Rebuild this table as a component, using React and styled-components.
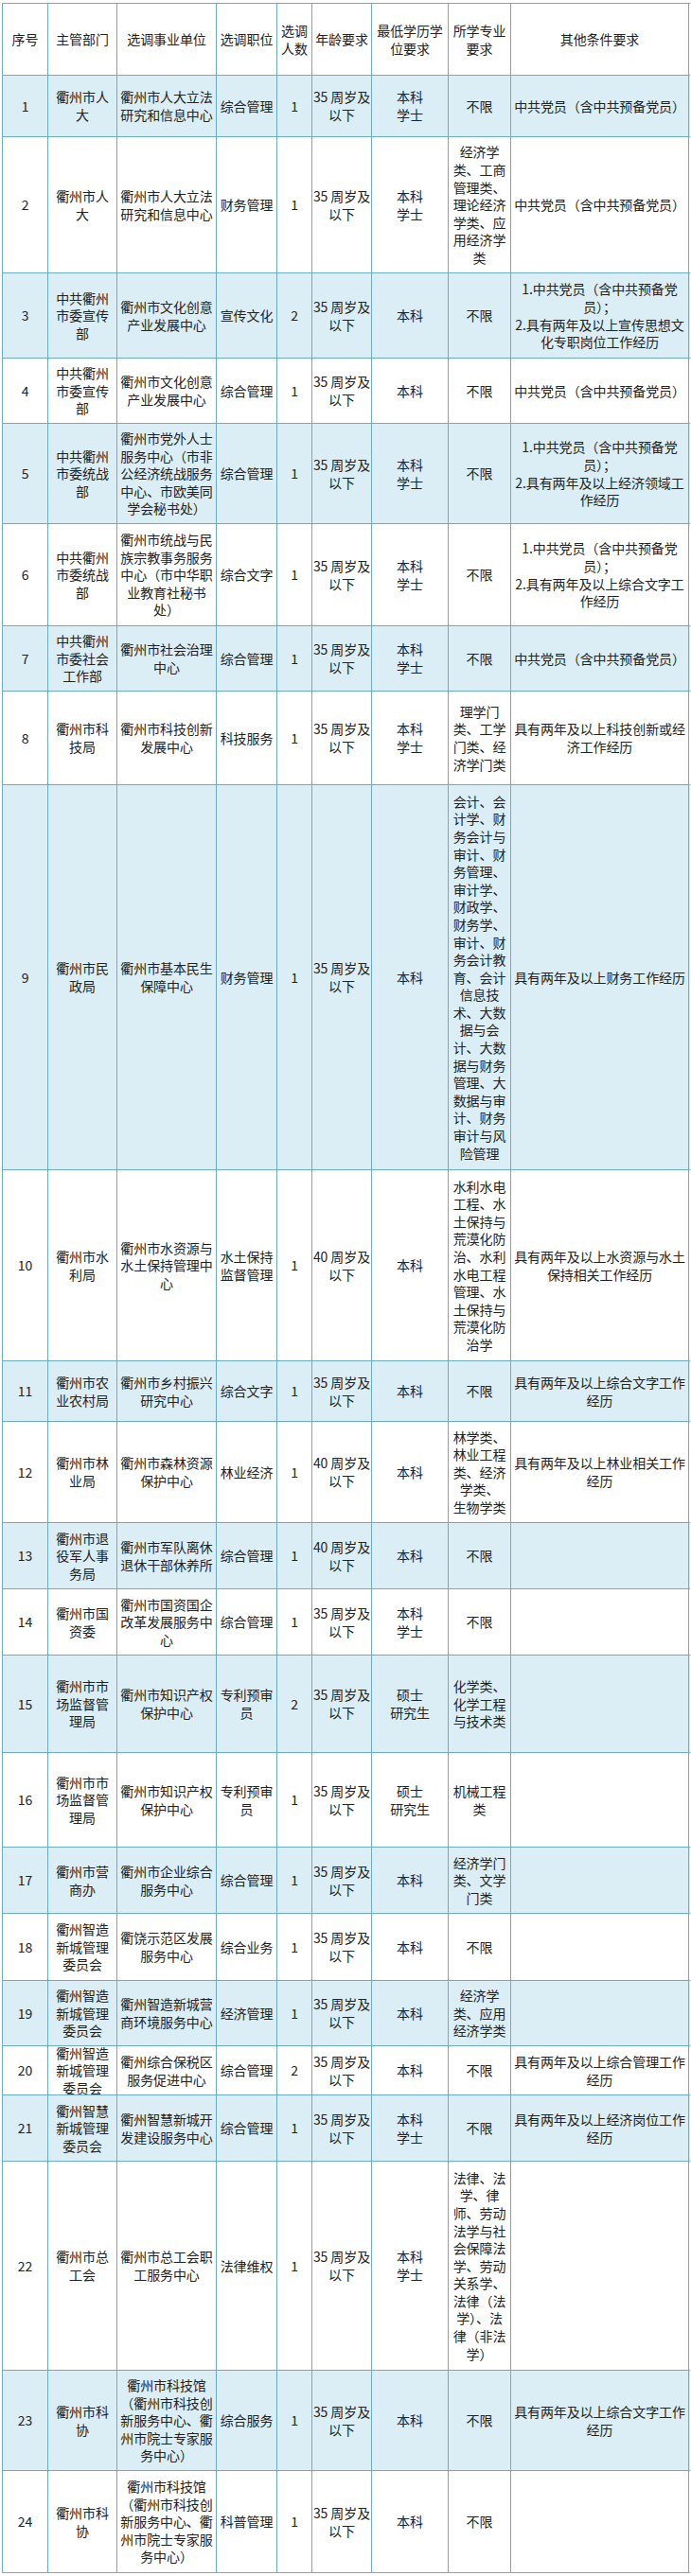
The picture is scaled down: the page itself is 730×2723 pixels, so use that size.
import React from "react";
import styled, { createGlobalStyle } from "styled-components";

const LINE = "#6badc9";
const STRIPE = "#dbeef5";

const GlobalStyle = createGlobalStyle`
  html, body {
    margin: 0;
    padding: 0;
    background: #fff;
  }
  body {
    font-family: "Noto Sans CJK SC", "Noto Sans", sans-serif;
    color: #222;
  }
`;

const COLS = "48px 73px 105px 64px 37px 63px 81px 66px 188px";

const head = [
  "序号",
  "主管部门",
  "选调事业单位",
  "选调职位",
  "选调\n人数",
  "年龄要求",
  "最低学历学\n位要求",
  "所学专业\n要求",
  "其他条件要求",
];

const PARTY = "中共党员（含中共预备党员）";
const AGE35 = "35 周岁及\n以下";
const AGE40 = "40 周岁及\n以下";
const KJG = "衢州市科技馆\n（衢州市科技创\n新服务中心、衢\n州市院士专家服\n务中心）";

// [height, ...cells]
const rows = [
  [65, "1", "衢州市人\n大", "衢州市人大立法\n研究和信息中心", "综合管理", "1", AGE35, "本科\n学士", "不限", PARTY],
  [144, "2", "衢州市人\n大", "衢州市人大立法\n研究和信息中心", "财务管理", "1", AGE35, "本科\n学士",
    "经济学\n类、工商\n管理类、\n理论经济\n学类、应\n用经济学\n类", PARTY],
  [90, "3", "中共衢州\n市委宣传\n部", "衢州市文化创意\n产业发展中心", "宣传文化", "2", AGE35, "本科", "不限",
    "1.中共党员（含中共预备党\n员）；\n2.具有两年及以上宣传思想文\n化专职岗位工作经历"],
  [69, "4", "中共衢州\n市委宣传\n部", "衢州市文化创意\n产业发展中心", "综合管理", "1", AGE35, "本科", "不限", PARTY],
  [106, "5", "中共衢州\n市委统战\n部", "衢州市党外人士\n服务中心（市非\n公经济统战服务\n中心、市欧美同\n学会秘书处）",
    "综合管理", "1", AGE35, "本科\n学士", "不限",
    "1.中共党员（含中共预备党\n员）；\n2.具有两年及以上经济领域工\n作经历"],
  [108, "6", "中共衢州\n市委统战\n部", "衢州市统战与民\n族宗教事务服务\n中心（市中华职\n业教育社秘书\n处）",
    "综合文字", "1", AGE35, "本科\n学士", "不限",
    "1.中共党员（含中共预备党\n员）；\n2.具有两年及以上综合文字工\n作经历"],
  [69, "7", "中共衢州\n市委社会\n工作部", "衢州市社会治理\n中心", "综合管理", "1", AGE35, "本科\n学士", "不限", PARTY],
  [99, "8", "衢州市科\n技局", "衢州市科技创新\n发展中心", "科技服务", "1", AGE35, "本科\n学士",
    "理学门\n类、工学\n门类、经\n济学门类", "具有两年及以上科技创新或经\n济工作经历"],
  [407, "9", "衢州市民\n政局", "衢州市基本民生\n保障中心", "财务管理", "1", AGE35, "本科",
    "会计、会\n计学、财\n务会计与\n审计、财\n务管理、\n审计学、\n财政学、\n财务学、\n审计、财\n务会计教\n育、会计\n信息技\n术、大数\n据与会\n计、大数\n据与财务\n管理、大\n数据与审\n计、财务\n审计与风\n险管理",
    "具有两年及以上财务工作经历"],
  [202, "10", "衢州市水\n利局", "衢州市水资源与\n水土保持管理中\n心", "水土保持\n监督管理", "1", AGE40, "本科",
    "水利水电\n工程、水\n土保持与\n荒漠化防\n治、水利\n水电工程\n管理、水\n土保持与\n荒漠化防\n治学",
    "具有两年及以上水资源与水土\n保持相关工作经历"],
  [64, "11", "衢州市农\n业农村局", "衢州市乡村振兴\n研究中心", "综合文字", "1", AGE35, "本科", "不限",
    "具有两年及以上综合文字工作\n经历"],
  [107, "12", "衢州市林\n业局", "衢州市森林资源\n保护中心", "林业经济", "1", AGE40, "本科",
    "林学类、\n林业工程\n类、经济\n学类、\n生物学类", "具有两年及以上林业相关工作\n经历"],
  [70, "13", "衢州市退\n役军人事\n务局", "衢州市军队离休\n退休干部休养所", "综合管理", "1", AGE40, "本科", "不限", ""],
  [70, "14", "衢州市国\n资委", "衢州市国资国企\n改革发展服务中\n心", "综合管理", "1", AGE35, "本科\n学士", "不限", ""],
  [103, "15", "衢州市市\n场监督管\n理局", "衢州市知识产权\n保护中心", "专利预审\n员", "2", AGE35, "硕士\n研究生",
    "化学类、\n化学工程\n与技术类", ""],
  [100, "16", "衢州市市\n场监督管\n理局", "衢州市知识产权\n保护中心", "专利预审\n员", "1", AGE35, "硕士\n研究生",
    "机械工程\n类", ""],
  [70, "17", "衢州市营\n商办", "衢州市企业综合\n服务中心", "综合管理", "1", AGE35, "本科", "经济学门\n类、文学\n门类", ""],
  [71, "18", "衢州智造\n新城管理\n委员会", "衢饶示范区发展\n服务中心", "综合业务", "1", AGE35, "本科", "不限", ""],
  [69, "19", "衢州智造\n新城管理\n委员会", "衢州智造新城营\n商环境服务中心", "经济管理", "1", AGE35, "本科",
    "经济学\n类、应用\n经济学类", ""],
  [52, "20", "衢州智造\n新城管理\n委员会", "衢州综合保税区\n服务促进中心", "综合管理", "2", AGE35, "本科", "不限",
    "具有两年及以上综合管理工作\n经历"],
  [70, "21", "衢州智慧\n新城管理\n委员会", "衢州智慧新城开\n发建设服务中心", "综合管理", "1", AGE35, "本科\n学士", "不限",
    "具有两年及以上经济岗位工作\n经历"],
  [221, "22", "衢州市总\n工会", "衢州市总工会职\n工服务中心", "法律维权", "1", AGE35, "本科\n学士",
    "法律、法\n学、律\n师、劳动\n法学与社\n会保障法\n学、劳动\n关系学、\n法律（法\n学）、法\n律（非法\n学）", ""],
  [106, "23", "衢州市科\n协", KJG, "综合服务", "1", AGE35, "本科", "不限", "具有两年及以上综合文字工作\n经历"],
  [108, "24", "衢州市科\n协", KJG, "科普管理", "1", AGE35, "本科", "不限", ""],
];

const Page = styled.div`
  padding: 3px 0 4px 2px;
`;

const Table = styled.div`
  width: 726px;
  border-top: 1px solid ${LINE};
  border-left: 1px solid ${LINE};
`;

const Row = styled.div`
  display: grid;
  grid-template-columns: ${COLS};
  height: ${(p) => p.$h}px;
  background: ${(p) => (p.$striped ? STRIPE : "#fff")};
  border-bottom: 1px solid ${LINE};
  box-sizing: border-box;
`;

const Cell = styled.div`
  display: flex;
  align-items: center;
  justify-content: center;
  text-align: center;
  border-right: 1px solid ${LINE};
  box-sizing: border-box;
  overflow: hidden;
  white-space: pre;
  font-size: 14px;
  line-height: 18.6px;
  letter-spacing: -0.1px;
`;

export default function App() {
  return (
    <Page>
      <GlobalStyle />
      <Table>
        <Row $h={76}>
          {head.map((t, i) => (
            <Cell key={i}>{t}</Cell>
          ))}
        </Row>
        {rows.map(([h, ...cells], r) => (
          <Row key={r} $h={h} $striped={r % 2 === 0}>
            {cells.map((t, i) => (
              <Cell key={i}>{t}</Cell>
            ))}
          </Row>
        ))}
      </Table>
    </Page>
  );
}
